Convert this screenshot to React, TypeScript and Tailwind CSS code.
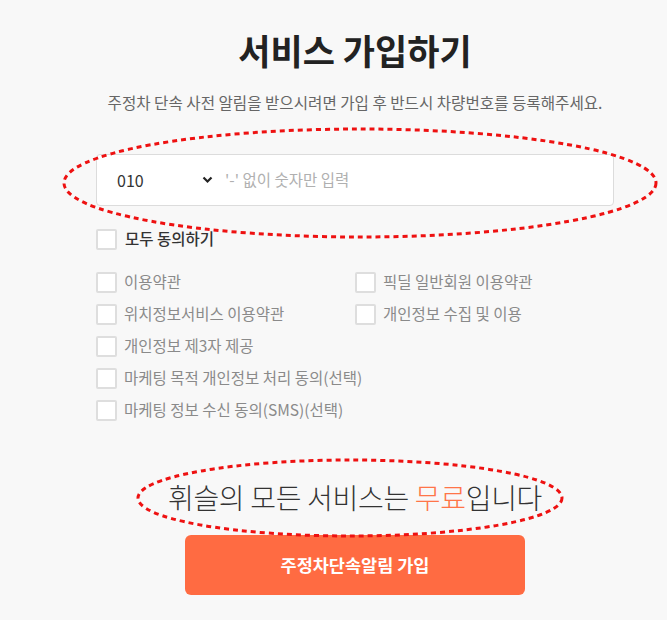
const checks = [
  ["이용약관", "픽딜 일반회원 이용약관"],
  ["위치정보서비스 이용약관", "개인정보 수집 및 이용"],
  ["개인정보 제3자 제공", ""],
  ["마케팅 목적 개인정보 처리 동의(선택)", ""],
  ["마케팅 정보 수신 동의(SMS)(선택)", ""],
];

function Box() {
  return <span className="h-[21px] w-[21px] shrink-0 rounded-[2px] border-2 border-[#dedede] bg-white" />;
}

function CheckRow({ label }: { label: string }) {
  if (!label) return <div />;
  return (
    <label className="flex h-6 items-center gap-[7px] whitespace-nowrap text-[15.5px] text-[#8a8a8a]">
      <Box />
      <span>{label}</span>
    </label>
  );
}

export default function App() {
  return (
    <div
      className="relative min-h-screen bg-[#f8f8f8]"
      style={{ fontFamily: '"Noto Sans CJK KR", "Noto Sans", sans-serif' }}
    >
      <div className="ml-[96px] w-[518px] pt-[27px]">
        {/* Title */}
        <h1 className="text-center text-[35px] font-bold leading-[46px] text-[#222]">서비스 가입하기</h1>
        <p className="mt-[19px] -mx-[20px] whitespace-nowrap text-center text-[15.6px] leading-5 text-[#666]">
          주정차 단속 사전 알림을 받으시려면 가입 후 반드시 차량번호를 등록해주세요.
        </p>

        {/* Phone input */}
        <div className="mt-[42px] flex h-[52px] items-center rounded-[4px] border border-[#dcdcdc] bg-white">
          <div className="flex w-[128px] items-center pl-[20px] pr-[10px]">
            <span className="flex-1 text-[16px] text-[#333]">010</span>
            <svg width="11" height="8" viewBox="0 0 11 8" className="mr-[2px]">
              <path d="M1.5 1.5 L5.5 5.5 L9.5 1.5" fill="none" stroke="#222" strokeWidth="2.2" />
            </svg>
          </div>
          <span className="text-[15.5px] text-[#b0b0b0]">'-' 없이 숫자만 입력</span>
        </div>

        {/* Agree all */}
        <label className="mt-[21px] flex h-6 items-center gap-[8px] whitespace-nowrap text-[15.5px] font-medium text-[#333]">
          <Box />
          <span>모두 동의하기</span>
        </label>

        {/* Terms */}
        <div className="mt-[19px] grid grid-cols-2 gap-y-2">
          {checks.map(([a, b], i) => (
            <div key={i} className="contents">
              <CheckRow label={a} />
              <CheckRow label={b} />
            </div>
          ))}
        </div>

        <p className="mt-[56px] -mx-[20px] whitespace-nowrap text-center text-[28px] font-light leading-[38px] tracking-[-0.3px] text-[#333]">
          휘슬의 모든 서비스는 <span className="text-[#ff7548]">무료</span>입니다
        </p>

        <button className="mx-auto mt-[19px] flex h-[60px] w-[340px] items-center justify-center rounded-[6px] bg-[#ff6b42] text-[17.5px] font-bold text-white">
          주정차단속알림 가입
        </button>
      </div>

      {/* Annotation ellipses */}
      <svg className="pointer-events-none absolute left-0 top-0" width="667" height="620">
        <ellipse cx="360" cy="183" rx="296" ry="54" fill="none" stroke="#ee1111" strokeWidth="3" strokeDasharray="5 4" />
        <ellipse cx="350" cy="498" rx="212" ry="38" fill="none" stroke="#ee1111" strokeWidth="3" strokeDasharray="5 4" />
      </svg>
    </div>
  );
}
